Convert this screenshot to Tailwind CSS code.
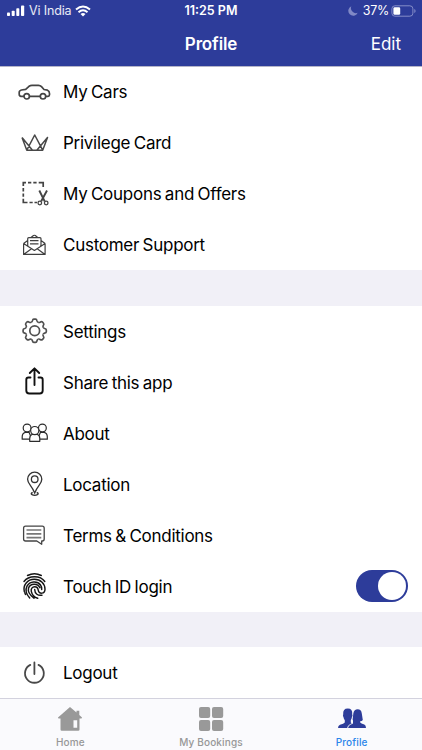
<!DOCTYPE html>
<html lang="en">
<head>
<meta charset="utf-8">
<meta name="viewport" content="width=device-width, initial-scale=1">
<title>Profile</title>
<script src="https://cdn.jsdelivr.net/npm/@tailwindcss/browser@4"></script>
</head>
<body class="bg-white text-black font-['Inter','Liberation_Sans',sans-serif]">
<div class="w-[422px] h-[750px] flex flex-col overflow-hidden">
  <header class="h-[66px] shrink-0 bg-[#2d3c9a] text-white">
    <div class="h-[22px] grid grid-cols-3 items-center px-[6px] text-[12.5px] leading-none">
      <div class="flex items-center">
        <svg class="w-[19px] h-[12px]" viewBox="0 0 19 12" fill="#fff"><rect x="1" y="7.5" width="3" height="3.5" rx=".8"/><rect x="5.700" y="5.700" width="3" height="5.300" rx=".8"/><rect x="10.300" y="3.200" width="3" height="7.800" rx=".8"/><rect x="15" y=".5" width="3.200" height="10.500" rx=".8"/></svg>
        <span class="ml-[4px] tracking-[-0.15px] whitespace-nowrap text-white/90">Vi India</span>
        <svg class="ml-[4px] w-[16px] h-[12px]" viewBox="0 0 16 12" fill="none" stroke="#fff" stroke-width="2"><path d="M1 4.500Q8-1.500 15 4.500M3.500 7.200Q8 3.300 12.500 7.200"/><path d="M5.500 9Q8 7 10.500 9L8 11.500Z" fill="#fff" stroke="none"/></svg>
      </div>
      <div class="text-center font-semibold">11:25 PM</div>
      <div class="flex items-center justify-end">
        <svg class="w-[10px] h-[10px]" viewBox="0 0 10 10" fill="#8089c6"><path d="M3.300.3A4.900 4.900 0 1 0 9.700 6.800 5 5 0 0 1 3.300.3Z"/></svg>
        <span class="ml-[5px] mr-[2px] tracking-[-0.3px]">37%</span>
        <svg class="w-[25px] h-[12px]" viewBox="0 0 25 12" fill="none"><rect x=".9" y=".8" width="21" height="10.400" rx="3" stroke="#858dc8"/><rect x="2.400" y="2.300" width="6.800" height="7.400" rx="1.300" fill="#fff"/><path d="M23.300 4v4Q24.600 7.300 24.600 6T23.300 4Z" fill="#858dc8"/></svg>
      </div>
    </div>
    <div class="h-[44px] grid grid-cols-3 items-center px-[21px] text-[17px] leading-none">
      <span></span><h1 class="text-center font-semibold tracking-[-0.15px]">Profile</h1><span class="text-right">Edit</span>
    </div>
  </header>

  <main class="flex flex-col shrink-0 text-[17px] leading-none tracking-[-0.27px] [word-spacing:-1px]">
    <section class="border-t border-[#b5b5c8] h-[204px]">
      <div class="-mt-px h-[51px] flex items-center pl-4">
        <svg class="w-9 h-[51px] mr-[11px]" viewBox="0 0 36 51" fill="none" stroke="#444" stroke-width="1.700" stroke-linejoin="round"><path d="M8 30.300H5Q3.200 30.300 3.200 28V26.500Q3.200 24.500 5.500 24L9.700 23.300 13 20.300Q14.300 19.400 16 19.400H22.500Q24.300 19.400 25.500 20.700L28 23.500 31.500 24.200Q33.500 25 33.500 27.500V28.800Q33.500 30.300 32 30.300H29.700M13.400 30.300H24.300"/><circle cx="10.700" cy="30.300" r="2.700"/><circle cx="27" cy="30.300" r="2.700"/></svg>
        <span class="pt-[2px]">My Cars</span>
      </div>
      <div class="h-[51px] flex items-center pl-4">
        <svg class="w-9 h-[51px] mr-[11px]" viewBox="0 0 36 51" fill="none" stroke="#484848" stroke-width="1.500" stroke-linejoin="round"><path d="M6 20.500 10.800 33.200H26.700L31.500 20.500 20.800 33.200M6 20.500 16.500 33.200M10.800 33.200 18.700 18 26.700 33.200"/></svg>
        <span class="pt-[2px]">Privilege Card</span>
      </div>
      <div class="h-[51px] flex items-center pl-4">
        <svg class="w-9 h-[51px] mr-[11px]" viewBox="0 0 36 51" fill="none" stroke="#444" stroke-width="1.700"><path d="M7.300 18V14.600H10M12 14.600h3.300M17.300 14.600h3.300M22.700 14.600H27.200V19M7.300 20v3.400M7.300 25.400v3.400M7.300 30.700V34.500H11.500M13.500 34.500h3.200M18.500 34.500h2.500"/><path d="M23.300 22.500 28.700 33.300M31 22.500 25.200 33.300" stroke-width="1.900"/><circle cx="23.800" cy="35" r="1.800" stroke-width="1.300"/><circle cx="30.200" cy="35" r="1.800" stroke-width="1.300"/></svg>
        <span class="pt-[2px]">My Coupons and Offers</span>
      </div>
      <div class="h-[51px] flex items-center pl-4">
        <svg class="w-9 h-[51px] mr-[11px]" viewBox="0 0 36 51" fill="none" stroke="#3f3f3f" stroke-width="1.200" stroke-linejoin="round"><path d="M7.600 24.500V35.400H29.100V24.500M7.600 24.500 18.400 31.500 29.100 24.500M7.600 35.400 15.500 29.700M29.100 35.400 21.200 29.700M7.600 24.500 11.700 21.500M29.100 24.500 25 21.500M11.700 27V19.700Q11.700 18.700 12.700 18.700H24Q25 18.700 25 19.700V27M15 18.500 17.500 16.500Q18.400 16 19.300 16.500L21.700 18.500"/><path d="M14 21.700H22.500M14 24.800H22.500" stroke-width="1.300"/></svg>
        <span class="pt-[2px]">Customer Support</span>
      </div>
    </section>

    <div class="h-9 bg-[#f1f0f7]"></div>

    <section>
      <div class="h-[51px] flex items-center pl-4">
        <svg class="w-9 h-[51px] mr-[11px]" viewBox="0 0 36 51" fill="none" stroke="#505050" stroke-width="1.700" stroke-linejoin="round">
          <defs><path id="tooth" d="M-3.520-8.500Q-2.600-8.800-2.300-9.900-1.900-11.600-.9-11.600H.9Q1.900-11.600 2.300-9.900 2.600-8.800 3.520-8.500"/></defs>
          <g transform="translate(18.700 24.800)"><circle r="4.900"/><use href="#tooth"/><use href="#tooth" transform="rotate(45)"/><use href="#tooth" transform="rotate(90)"/><use href="#tooth" transform="rotate(135)"/><use href="#tooth" transform="rotate(180)"/><use href="#tooth" transform="rotate(225)"/><use href="#tooth" transform="rotate(270)"/><use href="#tooth" transform="rotate(315)"/></g></svg>
        <span class="pt-[2px]">Settings</span>
      </div>
      <div class="h-[51px] flex items-center pl-4">
        <svg class="w-9 h-[51px] mr-[11px]" viewBox="0 0 36 51" fill="none" stroke="#111" stroke-width="1.900" stroke-linecap="round" stroke-linejoin="round"><path d="M14.500 20.500H12.500Q10.300 20.500 10.300 22.700V33.500Q10.300 36.500 13.300 36.500H23.700Q26.700 36.500 26.700 33.500V22.700Q26.700 20.500 24.500 20.500H22.500M18.500 28V11.500M13.800 16 18.500 11.300 23.200 16"/></svg>
        <span class="pt-[2px]">Share this app</span>
      </div>
      <div class="h-[51px] flex items-center pl-4">
        <svg class="w-9 h-[51px] mr-[11px]" viewBox="0 0 36 51" fill="#fff" stroke="#2b2b2b" stroke-width="1.200" stroke-linejoin="round"><path d="M6.200 31.200V28.700Q6.200 25.200 9.300 24.300H13L16 31.200ZM31.300 31.200V28.700Q31.300 25.200 28.200 24.300H24.500L21.500 31.200Z"/><circle cx="11.100" cy="20" r="3.900"/><circle cx="26.400" cy="20" r="3.900"/><path d="M13.700 33.300V30.500Q13.700 27.300 16.500 26.300H21Q23.800 27.300 23.800 30.500V33.300Z"/><circle cx="18.750" cy="22.600" r="4.100"/></svg>
        <span class="pt-[2px]">About</span>
      </div>
      <div class="h-[51px] flex items-center pl-4">
        <svg class="w-9 h-[51px] mr-[11px]" viewBox="0 0 36 51" fill="none" stroke="#333" stroke-width="1.300"><path d="M18.700 34Q17 30 14.500 26.700 11.600 23 11.600 20.300A7.100 7.100 0 0 1 25.800 20.300Q25.800 23 22.900 26.700 20.400 30 18.700 34Z"/><circle cx="18.700" cy="20.200" r="3.300"/><path d="M16.700 33.500Q15.200 33.900 15.200 34.700 15.500 36.300 18.700 36.300T22.200 34.700Q22.200 33.900 20.700 33.500"/></svg>
        <span class="pt-[2px]">Location</span>
      </div>
      <div class="h-[51px] flex items-center pl-4">
        <svg class="w-9 h-[51px] mr-[11px]" viewBox="0 0 36 51" fill="none" stroke="#444" stroke-width="1.300" stroke-linejoin="round"><path d="M9.600 16.200H26.200Q28.200 16.200 28.200 18.200V29Q28.200 31 26.200 31H25.700V34.300L20.800 31H9.600Q7.600 31 7.600 29V18.200Q7.600 16.200 9.600 16.200Z"/><path d="M10.500 20H25.300M10.500 23.800H25.300M10.500 27.600H25.300" stroke="#777" stroke-width="1.700"/></svg>
        <span class="pt-[2px]">Terms &amp; Conditions</span>
      </div>
      <div class="h-[51px] flex items-center pl-4 pr-[14px]">
        <svg class="w-9 h-[51px] mr-[11px]" viewBox="0 0 36 51" fill="none" stroke="#151515" stroke-width="1.450" stroke-linecap="round"><path d="M11.500 14.500Q18.500 10.800 25.300 14.500M8 20.500Q11.500 15.700 18.500 15.700 25.500 15.700 28.800 20.500M8.300 30.500C6.800 24 11.500 18.300 18.300 18.300 24.800 18.300 29 22.800 29 28.200 29 33 22.800 33.500 22.300 29.300 22 26.800 20.600 25.700 18.700 25.700 16.200 25.700 14.700 27.900 15.300 30.300 16.200 34.300 18.500 36.300 21.700 37.200M13.700 37C10 33 9.200 28.700 11 25.200 13.800 20.100 21.300 19.600 24.500 24 25.800 25.800 25.700 27 25.700 28.500M18 37.200C13.800 34 11.800 30 12.500 27.200 14.100 21.900 21.800 21.900 23.900 26.700M18.700 28.500C18.800 33 22 34.800 26 34.200M9.500 33.500 8.800 31.800"/></svg>
        <span class="pt-[2px]">Touch ID login</span>
        <button role="switch" aria-checked="true" aria-label="Touch ID login" class="ml-auto mb-[2px] w-[52.500px] h-8 rounded-full bg-[#2d3c9a] flex items-center justify-end pr-[2px]"><span class="w-7 h-7 rounded-full bg-white"></span></button>
      </div>
    </section>

    <div class="h-[35px] bg-[#f1f0f7]"></div>

    <section>
      <div class="h-[51px] flex items-center pl-4">
        <svg class="w-9 h-[51px] mr-[11px]" viewBox="0 0 36 51" fill="none" stroke="#484848" stroke-width="1.800" stroke-linecap="round"><path d="M14.300 17.900A9.400 9.400 0 1 0 22.500 17.900M18.400 15.500V27"/></svg>
        <span class="pt-[2px]">Logout</span>
      </div>
    </section>
  </main>

  <nav class="flex-1 border-t border-[#d3d2de] bg-[#fafafd] grid grid-cols-3 text-[10px] leading-none font-medium text-[#979797] tracking-[0.15px]">
    <div class="flex flex-col items-center pt-[6px]">
      <svg class="w-7 h-7" viewBox="0 0 28 28" fill="#999"><path fill-rule="evenodd" d="M14 2 2 12.500Q1.800 13.400 3 13.400H4.500V24.500Q4.500 25.700 5.700 25.700H22.300Q23.500 25.700 23.500 24.500V13.400H25Q26.200 13.400 26 12.500L23.300 10V5.800H20.500V7.600ZM17.500 15.200H21.200V22.800H17.500Z"/></svg>
      <span class="mt-[4px]">Home</span>
    </div>
    <div class="flex flex-col items-center pt-[6px]">
      <svg class="w-7 h-7" viewBox="0 0 28 28" fill="#999"><rect x="2" y="2" width="11.200" height="11" rx="2"/><rect x="15" y="2" width="11.200" height="11" rx="2"/><rect x="2" y="15" width="11.200" height="11" rx="2"/><rect x="15" y="15" width="11.200" height="11" rx="2"/></svg>
      <span class="mt-[4px]">My Bookings</span>
    </div>
    <div class="flex flex-col items-center pt-[6px]">
      <svg class="w-7 h-7" viewBox="0 0 28 28" fill="#2d3c9a"><path d="M15 18V15.500L14.600 14.500Q15 12 15.300 8.500 16.200 4.300 19.600 4.300 23.300 4.300 23.800 8.500L24.800 15Q24 16.200 22.200 16.200V17.500Q23 18.700 26.300 19.600 28 20.300 28 23H14Z"/><path d="M6.800 17.500V15.300Q5.700 13.800 5.500 12.200 4.500 10.800 5.200 9.200 4.700 3.600 9.800 3.600 14.800 3.600 14.200 9.200 15 10.800 13.900 12.200 13.700 13.800 12.800 15.300V17.500Q13.800 18.700 17 19.700 19 20.500 19 23H0Q0 20.500 2 19.700 5.800 18.700 6.800 17.500Z"/><path d="M14.300 18.300 12.300 19.500Q10 20.300 9.600 23" fill="none" stroke="#fafafd" stroke-width=".9"/></svg>
      <span class="mt-[4px] text-[#2b86ea]">Profile</span>
    </div>
  </nav>
</div>
</body>
</html>
